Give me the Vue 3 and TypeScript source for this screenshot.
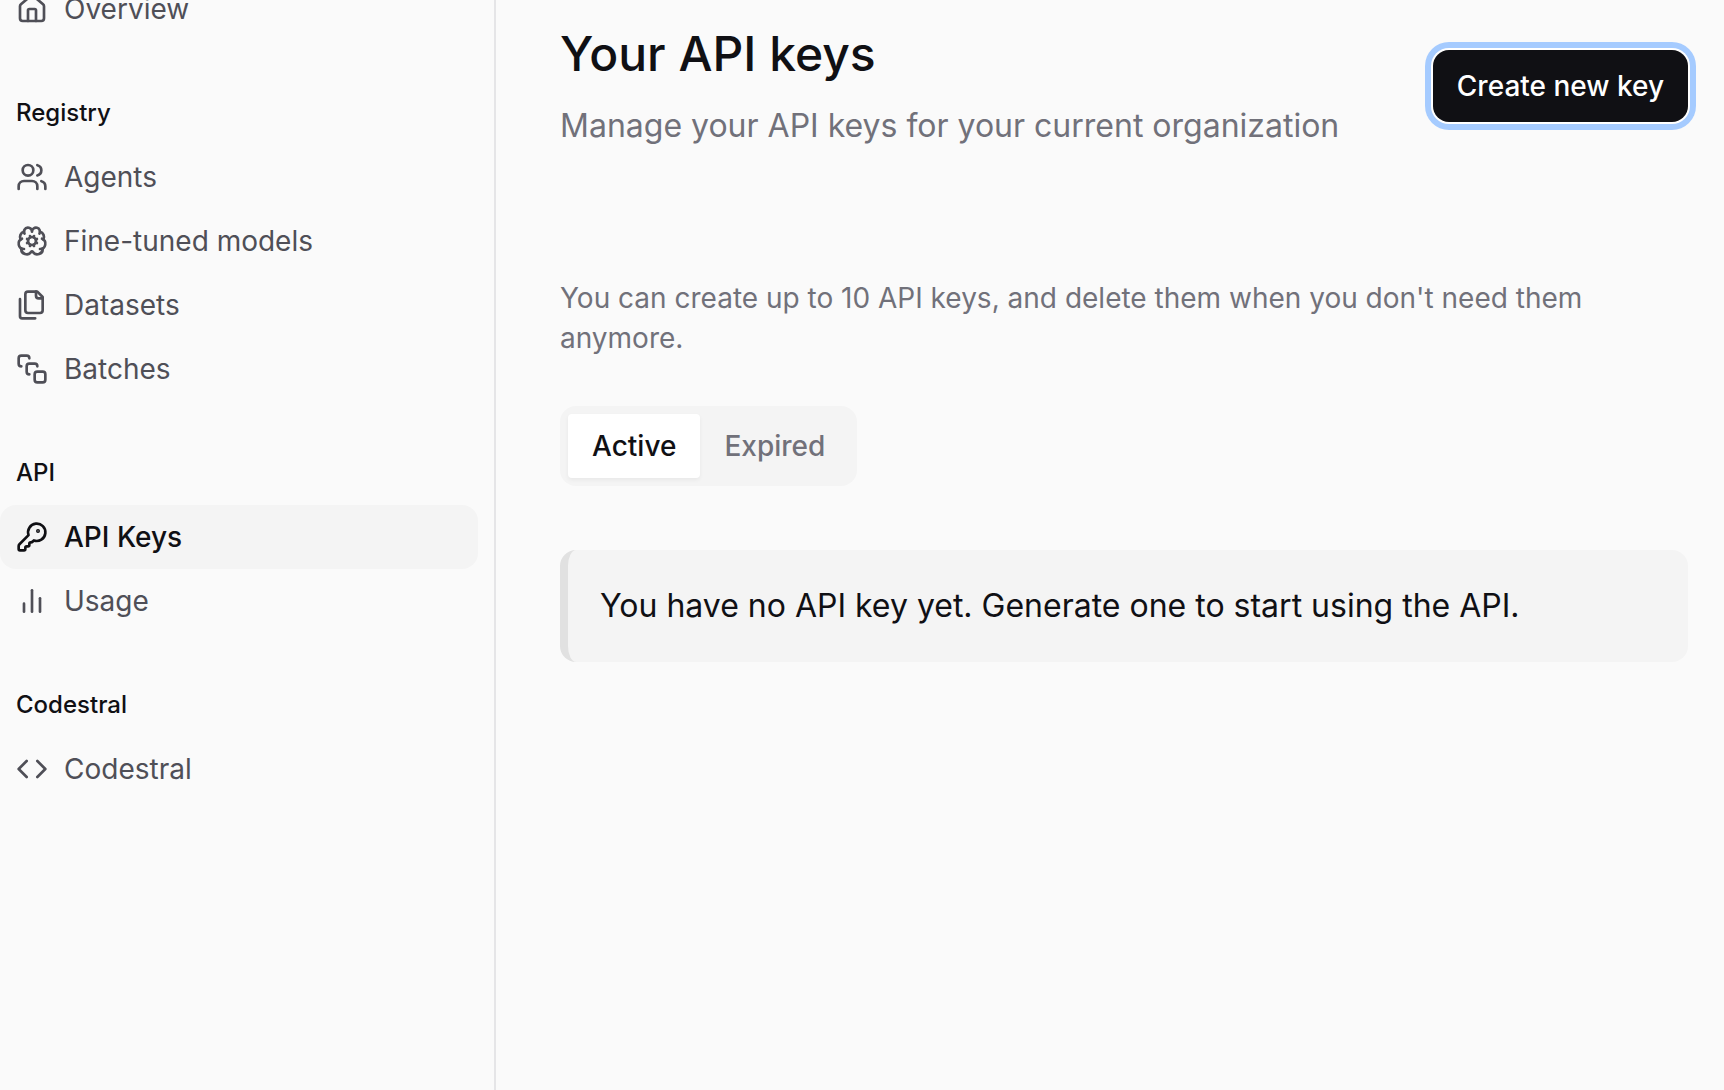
<script setup lang="ts">
import { ref } from 'vue'

interface Shape {
  tag: 'path' | 'circle' | 'rect'
  attrs: Record<string, string | number>
}

interface NavItem {
  label: string
  icon: Shape[]
  active?: boolean
}

interface NavGroup {
  title?: string
  items: NavItem[]
}

const p = (d: string): Shape => ({ tag: 'path', attrs: { d } })
const c = (cx: number, cy: number, r: number, fill = 'none'): Shape => ({ tag: 'circle', attrs: { cx, cy, r, fill } })

const groups: NavGroup[] = [
  {
    items: [
      {
        label: 'Overview',
        icon: [
          p('M15 21v-8a1 1 0 0 0-1-1h-4a1 1 0 0 0-1 1v8'),
          p('M3 10a2 2 0 0 1 .709-1.528l7-5.999a2 2 0 0 1 2.582 0l7 5.999A2 2 0 0 1 21 10v9a2 2 0 0 1-2 2H5a2 2 0 0 1-2-2z'),
        ],
      },
    ],
  },
  {
    title: 'Registry',
    items: [
      {
        label: 'Agents',
        icon: [
          p('M16 21v-2a4 4 0 0 0-4-4H6a4 4 0 0 0-4 4v2'),
          c(9, 7, 4),
          p('M22 21v-2a4 4 0 0 0-3-3.87'),
          p('M16 3.13a4 4 0 0 1 0 7.75'),
        ],
      },
      {
        label: 'Fine-tuned models',
        icon: [
          p('m10.852 14.772-.383.923'),
          p('m10.852 9.228-.383-.923'),
          p('m13.148 14.772.382.924'),
          p('m13.531 8.305-.383.923'),
          p('m14.772 10.852.923-.383'),
          p('m14.772 13.148.923.383'),
          p('m9.228 10.852-.923-.383'),
          p('m9.228 13.148-.923.383'),
          p('M17.598 6.5A3 3 0 1 0 12 5a3 3 0 0 0-5.63-1.446 3 3 0 0 0-.368 1.571 4 4 0 0 0-2.525 5.771'),
          p('M17.998 5.125a4 4 0 0 1 2.525 5.771'),
          p('M19.505 10.294a4 4 0 0 1-1.5 7.706'),
          p('M4.032 17.483A4 4 0 0 0 11.464 20c.18-.311.892-.311 1.072 0a4 4 0 0 0 7.432-2.516'),
          p('M4.5 10.291A4 4 0 0 0 6 18'),
          p('M6.002 5.125a3 3 0 0 0 .4 1.375'),
          c(12, 12, 3),
        ],
      },
      {
        label: 'Datasets',
        icon: [
          p('M20 7h-3a2 2 0 0 1-2-2V2'),
          p('M9 18a2 2 0 0 1-2-2V4a2 2 0 0 1 2-2h7l4 4v10a2 2 0 0 1-2 2Z'),
          p('M3 7.6v12.8A1.6 1.6 0 0 0 4.6 22h9.8'),
        ],
      },
      {
        label: 'Batches',
        icon: [
          p('M4 10c-1.1 0-2-.9-2-2V4c0-1.1.9-2 2-2h4c1.1 0 2 .9 2 2'),
          p('M10 16c-1.1 0-2-.9-2-2v-4c0-1.1.9-2 2-2h4c1.1 0 2 .9 2 2'),
          { tag: 'rect', attrs: { x: 14, y: 14, width: 8, height: 8, rx: 2 } },
        ],
      },
    ],
  },
  {
    title: 'API',
    items: [
      {
        label: 'API Keys',
        active: true,
        icon: [
          p('M2.586 17.414A2 2 0 0 0 2 18.828V21a1 1 0 0 0 1 1h3a1 1 0 0 0 1-1v-1a1 1 0 0 1 1-1h1a1 1 0 0 0 1-1v-1a1 1 0 0 1 1-1h.172a2 2 0 0 0 1.414-.586l.814-.814a6.5 6.5 0 1 0-4-4z'),
          c(16.5, 7.5, 0.5, 'currentColor'),
        ],
      },
      { label: 'Usage', icon: [p('M18 20V10'), p('M12 20V4'), p('M6 20v-6')] },
    ],
  },
  {
    title: 'Codestral',
    items: [{ label: 'Codestral', icon: [p('m16 18 6-6-6-6'), p('m8 6-6 6 6 6')] }],
  },
]

const tabs = ['Active', 'Expired']
const currentTab = ref('Active')
</script>

<template>
  <div class="page">
    <nav class="sidebar" aria-label="Main">
      <section v-for="(group, i) in groups" :key="i" class="group">
        <h2 v-if="group.title" class="group-title">{{ group.title }}</h2>
        <a
          v-for="item in group.items"
          :key="item.label"
          href="#"
          class="nav-item"
          :class="{ active: item.active }"
          :aria-current="item.active ? 'page' : undefined"
        >
          <svg class="icon" viewBox="0 0 24 24" aria-hidden="true">
            <component :is="shape.tag" v-for="(shape, n) in item.icon" :key="n" v-bind="shape.attrs" />
          </svg>
          <span>{{ item.label }}</span>
        </a>
      </section>
    </nav>

    <main class="content">
      <header class="header">
        <div class="heading">
          <h1 class="title">Your API keys</h1>
          <p class="subtitle">Manage your API keys for your current organization</p>
        </div>
        <button type="button" class="create">Create new key</button>
      </header>

      <p class="hint">You can create up to 10 API keys, and delete them when you don't need them anymore.</p>

      <div class="tabs" role="tablist">
        <button
          v-for="tab in tabs"
          :key="tab"
          type="button"
          role="tab"
          class="tab"
          :class="{ selected: tab === currentTab }"
          :aria-selected="tab === currentTab"
          @click="currentTab = tab"
        >
          {{ tab }}
        </button>
      </div>

      <p class="callout">You have no API key yet. Generate one to start using the API.</p>
    </main>
  </div>
</template>

<style>
body {
  margin: 0;
  background: #fafafa;
}
</style>

<style scoped>
.page {
  display: flex;
  min-height: 100vh;
  overflow: hidden;
  background: #fafafa;
  color: #101014;
  font-family: Inter, 'Liberation Sans', sans-serif;
  font-size: 28px;
  line-height: 40px;
}

h1,
h2,
p {
  margin: 0;
}

button {
  border: 0;
  font: inherit;
  font-weight: 500;
  cursor: pointer;
}

.sidebar {
  box-sizing: border-box;
  flex: 0 0 496px;
  display: flex;
  flex-direction: column;
  gap: 48px;
  /* the navigation is scrolled slightly past its first entry */
  margin-top: -23px;
  padding-right: 16px;
  border-right: 2px solid #e5e5e7;
}

.group {
  display: flex;
  flex-direction: column;
}

.group-title {
  margin-bottom: 8px;
  padding: 0 16px;
  font-size: 24px;
  line-height: 48px;
  font-weight: 500;
}

.nav-item {
  display: flex;
  align-items: center;
  gap: 16px;
  height: 64px;
  padding: 0 16px;
  border-radius: 16px;
  color: #4f4f57;
  text-decoration: none;
}

.nav-item.active {
  background: #f4f4f4;
  color: #101014;
  font-weight: 500;
}

.icon {
  flex: none;
  width: 32px;
  height: 32px;
  fill: none;
  stroke: currentColor;
  stroke-width: 2;
  stroke-linecap: round;
  stroke-linejoin: round;
}

.content {
  flex: 1;
  min-width: 0;
  padding: 22px 36px 64px 64px;
}

.header {
  display: flex;
  align-items: center;
  justify-content: space-between;
  gap: 32px;
}

.heading {
  display: flex;
  flex-direction: column;
  gap: 16px;
}

.title {
  font-size: 48px;
  line-height: 64px;
  font-weight: 500;
}

.subtitle {
  color: #71717a;
  font-size: 32px;
  line-height: 48px;
}

.create {
  flex: none;
  height: 72px;
  padding: 0 24px;
  border-radius: 16px;
  background: #101014;
  color: #fff;
  box-shadow: 0 0 0 2px #fff, 0 0 0 8px #a5cbff;
}

.hint {
  margin-top: 128px;
  color: #71717a;
}

.tabs {
  display: flex;
  width: fit-content;
  margin-top: 48px;
  padding: 8px;
  border-radius: 16px;
  background: #f4f4f4;
}

.tab {
  height: 64px;
  padding: 0 24px;
  border-radius: 4px;
  background: transparent;
  color: #71717a;
}

.tab.selected {
  background: #fff;
  color: #101014;
  box-shadow: 0 2px 4px rgba(0, 0, 0, 0.05);
}

.callout {
  margin-top: 64px;
  padding: 32px;
  border-left: 8px solid #e1e1e1;
  border-radius: 16px;
  background: #f4f4f4;
  font-size: 32px;
  line-height: 48px;
}
</style>
